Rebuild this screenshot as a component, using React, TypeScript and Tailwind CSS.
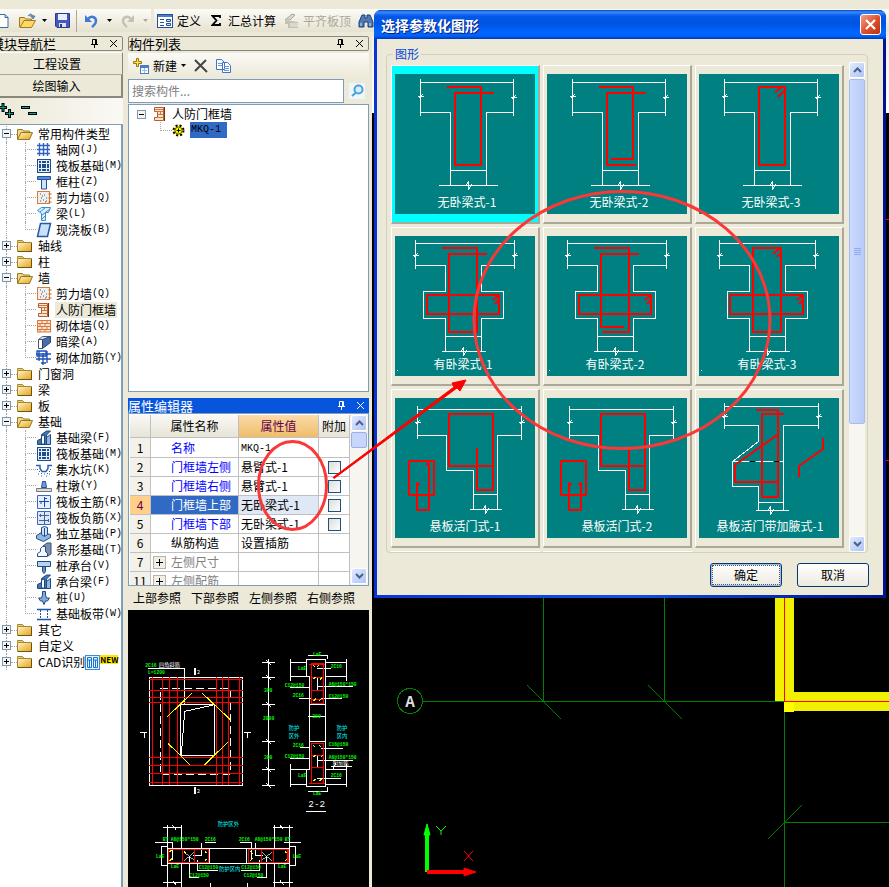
import { useState, type ReactNode } from "react";

type NodeItem = { label: string; key?: string; icon: string; active?: boolean };
type Group = { label: string; items?: NodeItem[]; isNew?: boolean };

const GROUPS: Group[] = [
  {
    label: "常用构件类型",
    items: [
      { label: "轴网", key: "(J)", icon: "grid" },
      { label: "筏板基础", key: "(M)", icon: "raft" },
      { label: "框柱", key: "(Z)", icon: "column" },
      { label: "剪力墙", key: "(Q)", icon: "shear" },
      { label: "梁", key: "(L)", icon: "beam" },
      { label: "现浇板", key: "(B)", icon: "slab" },
    ],
  },
  { label: "轴线" },
  { label: "柱" },
  {
    label: "墙",
    items: [
      { label: "剪力墙", key: "(Q)", icon: "shear" },
      { label: "人防门框墙", icon: "frame", active: true },
      { label: "砌体墙", key: "(Q)", icon: "brick" },
      { label: "暗梁", key: "(A)", icon: "hidden" },
      { label: "砌体加筋", key: "(Y)", icon: "rebar" },
    ],
  },
  { label: "门窗洞" },
  { label: "梁" },
  { label: "板" },
  {
    label: "基础",
    items: [
      { label: "基础梁", key: "(F)", icon: "footBeam" },
      { label: "筏板基础", key: "(M)", icon: "raft" },
      { label: "集水坑", key: "(K)", icon: "pit" },
      { label: "柱墩", key: "(Y)", icon: "pier" },
      { label: "筏板主筋", key: "(R)", icon: "mainBar" },
      { label: "筏板负筋", key: "(X)", icon: "negBar" },
      { label: "独立基础", key: "(P)", icon: "pad" },
      { label: "条形基础", key: "(T)", icon: "strip" },
      { label: "桩承台", key: "(V)", icon: "cap" },
      { label: "承台梁", key: "(F)", icon: "footBeam" },
      { label: "桩", key: "(U)", icon: "pile" },
      { label: "基础板带", key: "(W)", icon: "band" },
    ],
  },
  { label: "其它" },
  { label: "自定义" },
  { label: "CAD识别", isNew: true },
];

const ICONS: Record<string, ReactNode> = {
  grid: <path d="M3.5 1v13M7.5 1v13M11.5 1v13M1 3.5h13M1 7.5h13M1 11.5h13" stroke="#2f62c4" strokeWidth="1.4" fill="none" />,
  raft: (
    <>
      <rect x="1" y="1" width="14" height="14" fill="#1c4f8c" />
      <path d="M2.5 2.5h11v11h-11zM5.5 5.5h5v5h-5zM5.5 2.5v3M10.5 2.5v3M5.5 10.5v3M10.5 10.5v3M2.5 5.5h3M2.5 10.5h3M10.5 5.5h3M10.5 10.5h3" stroke="#e8f4ff" fill="none" />
    </>
  ),
  column: (
    <>
      <path d="M5.500 5h5v10h-5z" fill="#cfe4fa" stroke="#24509b" />
      <path d="M1.500 2.500h13v3h-13z" fill="#5b8ad6" stroke="#24509b" />
    </>
  ),
  shear: (
    <>
      <rect x="1.500" y="1.500" width="12" height="12" fill="#eee" stroke="#d87a3c" />
      <path d="M4 4h1M8 5h1M5 8h1M10 8h1M7 10h1M4 11h1M10 11h1M6 6h1M9 12h1" stroke="#555" />
      <path d="M12.500 4h3M12.500 8h3M12.500 12h3" stroke="#c95b12" />
    </>
  ),
  beam: (
    <>
      <path d="M1.500 4.500l4-3h9l-2 5h-3v8h-4v-7z" fill="#d9effc" stroke="#3a8bc9" />
      <path d="M4 6l5-4M6 9l8-6M6 13l4-4" stroke="#3a8bc9" />
    </>
  ),
  slab: <path d="M4.500 1.500h10l-3 13h-10z" fill="#c9e2fb" stroke="#2458a8" strokeWidth="1.500" />,
  frame: (
    <>
      <path d="M2.500 1.500h9v13h-9v-3h3v-6h-3z" fill="#fbe4cf" stroke="#b65f2a" />
      <path d="M6 5.500h5M6 8.500h5M6 11.500h5M8.500 5v4M3 3.500h8" stroke="#c97a45" />
      <path d="M12.500 1v14" stroke="#7c3408" />
    </>
  ),
  brick: (
    <>
      <rect x="1" y="2" width="14" height="12" fill="#fbe4d2" />
      <path d="M1 2.500h14M1 5.500h14M1 8.500h14M1 11.500h14M1 14h14M1.500 2v12M14.500 2v12M6 3v2M11 3v2M4 6v2M9 6v2M6 9v2M11 9v2M4 12v2M9 12v2" stroke="#d9783a" />
    </>
  ),
  hidden: (
    <>
      <path d="M2.500 5.500l4-3h8l-4 3z" fill="#e3e8ef" stroke="#44597d" />
      <path d="M2.500 5.500h4v9h-4z" fill="#fff" stroke="#44597d" />
      <path d="M6.500 5.500l8-3v6l-8 6z" fill="#4a6fa8" stroke="#2b4470" />
    </>
  ),
  rebar: <path d="M0 4h15M0 9h15M3 1v10M7 3v12M11 1v12M1 1h9v5H1zM5 13h5" stroke="#1d4fb8" strokeWidth="1.300" fill="none" />,
  footBeam: (
    <>
      <path d="M1.500 14.500v-4l4-2v-4l5-3.500h4l-4 4v9.500z" fill="#3e76b5" stroke="#1f4a80" />
      <path d="M5.500 14v-8l3-1v9z" fill="#fff" stroke="#1f4a80" />
      <path d="M10.500 14.500v-7l4-3v10z" fill="#8fb9e4" stroke="#1f4a80" />
    </>
  ),
  pit: (
    <>
      <path d="M0 3.500h4v3l2 3h4l2-3v-3h4" stroke="#2d64ad" strokeWidth="1.500" fill="none" />
      <path d="M1 7.500h1M3 9.500h1M2 12h1M5 11.500h1M8 12h1M11 11.500h1M13 9.500h1M14 7.500h1M5 14h1M10 14h1M13 12h1" stroke="#2d64ad" />
    </>
  ),
  pier: (
    <>
      <path d="M6.500 3.500h3l1 6h-5z" fill="#6a9be0" stroke="#244f96" />
      <path d="M.500 10.500h15v3h-15z" fill="#ddd" stroke="#777" />
    </>
  ),
  mainBar: (
    <>
      <path d="M1.500 1.500h13v13h-13z" fill="#e4efff" stroke="#3b66c0" />
      <path d="M8.500 3v10M3 7.500h10M8 4.500h3M5 7v3" stroke="#1a48aa" fill="none" />
    </>
  ),
  negBar: (
    <>
      <path d="M1.500 1.500h13v13h-13z" fill="#dbe8fb" stroke="#3b66c0" />
      <path d="M3 5.500h10M3 10.500h10M8.500 2v12M4.500 4v3M12.500 9v3" stroke="#445f94" fill="none" />
    </>
  ),
  pad: (
    <>
      <path d="M.500 9.500l5-3 9 2v3l-7 4-7-3z" fill="#8fb9e4" stroke="#1f4a80" />
      <path d="M5.500 1.500l3-1 3 1v7l-3 2-3-2z" fill="#cfe4fa" stroke="#1f4a80" />
      <path d="M8.500 2v8" stroke="#1f4a80" />
    </>
  ),
  strip: (
    <>
      <path d="M7 4l4-3h4v11l-3 2z" fill="#7d8fa8" stroke="#33527f" />
      <path d="M1.500 14.500v-3l3-2v-3l2-2h3v5l2 2v3z" fill="#f4f9ff" stroke="#244f86" />
    </>
  ),
  cap: (
    <>
      <path d="M1.500 3.500h13v5h-13z" fill="#b5d2f2" stroke="#1f4a80" />
      <path d="M6.500 8.500h3v5l-1.500 2-1.500-2z" fill="#5f93cf" stroke="#1f4a80" />
    </>
  ),
  pile: (
    <>
      <path d="M6.500 5V1.500h3V5l1 3h3l-2 3h-2L8 14.500 6.500 11h-2l-2-3h3z" fill="#7fabdf" stroke="#1f4a80" />
    </>
  ),
  band: (
    <>
      <path d="M1 3.500h14M1 13.500h14" stroke="#1d56a8" strokeWidth="1.500" />
      <path d="M4.500 4v9M11.500 4v9" stroke="#1d56a8" strokeDasharray="2 1" />
    </>
  ),
};

function Icon({ name }: { name: string }) {
  return (
    <svg width="16" height="16" viewBox="0 0 16 16" className="shrink-0">
      {ICONS[name]}
    </svg>
  );
}

function Folder({ open }: { open?: boolean }) {
  return (
    <svg width="16" height="16" viewBox="0 0 16 16" className="shrink-0">
      <defs>
        <linearGradient id="folder" x1="0" y1="0" x2="1" y2="1">
          <stop offset="0" stopColor="#fff6c4" />
          <stop offset="1" stopColor="#e3a21c" />
        </linearGradient>
      </defs>
      {open ? (
        <>
          <path d="M.500 13V3.500h5l1 1.500h6v3" fill="#f4d77c" stroke="#9a7a2c" />
          <path d="M.500 13.500l3.500-7h11.500l-3 7z" fill="url(#folder)" stroke="#9a7420" />
        </>
      ) : (
        <>
          <path d="M.500 4V2.500h5l1.500 2" fill="#f4d77c" stroke="#a58532" />
          <path d="M.500 4.500h14v9H.500z" fill="url(#folder)" stroke="#a58532" />
          <path d="M1 13.500h14M14.500 5v9" stroke="#6e5212" />
        </>
      )}
    </svg>
  );
}

function Expander({ open }: { open?: boolean }) {
  return (
    <button aria-label={open ? "折叠" : "展开"} className="shrink-0">
      <svg width="9" height="9" viewBox="0 0 9 9">
        <rect x=".5" y=".5" width="8" height="8" fill="#f5f4ee" stroke="#7898b5" />
        <path d={open ? "M2 4.500h5" : "M2 4.500h5M4.500 2v5"} stroke="#000" />
      </svg>
    </button>
  );
}

function NavTree() {
  return (
    <ul className="flex-1 overflow-hidden border-t border-r-2 border-[#7f9db9] bg-white pt-px">
      {GROUPS.map((g, gi) => (
        <li key={gi}>
          <div className="flex h-4 items-center">
            <div className="ml-[2px] flex h-4 w-[9px] shrink-0 flex-col items-center">
              <span className="h-[3px] border-l border-dotted border-[#aca899]" />
              <span className="flex">
                <Expander open={!!g.items} />
              </span>
              <span className="flex-1 border-l border-dotted border-[#aca899]" />
            </div>
            <span className="w-[6px] shrink-0 border-t border-dotted border-[#aca899]" />
            <Folder open={!!g.items} />
            <span className="ml-[5px] whitespace-nowrap">{g.label}</span>
            {g.isNew && <NewBadge />}
          </div>
          {g.items && (
            <ul>
              {g.items.map((n, i) => (
                <li key={i} className="flex h-4 items-center whitespace-nowrap">
                  <span className="ml-[6px] h-4 w-[19px] shrink-0 border-l border-dotted border-[#aca899]" />
                  <span className="flex h-4 w-[11px] shrink-0 flex-col">
                    <span className="h-2 border-b border-l border-dotted border-[#aca899]" />
                    {i < g.items!.length - 1 && <span className="h-2 border-l border-dotted border-[#aca899]" />}
                  </span>
                  <Icon name={n.icon} />
                  <a href="#" className={`ml-[3px] flex h-4 items-center px-px ${n.active ? "bg-[#ece9d8]" : ""}`}>
                    {n.label}
                    {n.key && <span className="[font-family:'Liberation_Mono',monospace] text-[10px]">{n.key}</span>}
                  </a>
                </li>
              ))}
            </ul>
          )}
        </li>
      ))}
    </ul>
  );
}

function NewBadge() {
  return (
    <span className="flex shrink-0 items-center">
      <svg width="15" height="15" viewBox="0 0 15 15">
        <rect x=".5" y=".5" width="14" height="14" fill="#e3f3ff" stroke="#3a8bdc" />
        <path d="M2.500 2.500h4v10h-4zM8.500 2.500h4v10h-4zM2.500 5h4M8.500 5h4M4.500 5v7M10.500 5v7" stroke="#1c72cf" fill="none" />
      </svg>
      <b className="self-start bg-[#ffe600] text-[8px] leading-[9px]">NEW</b>
    </span>
  );
}

function PaneTitle({ children, active }: { children: ReactNode; active?: boolean }) {
  return (
    <div
      className={`flex h-[15px] shrink-0 items-center justify-between ${
        active ? "bg-[#0855dd] text-white" : "rounded-[2px] border border-[#8a887c] bg-[#ece9d8] text-black"
      }`}
    >
      <h2 className="text-[13px] leading-5 whitespace-nowrap">{children}</h2>
      <span className="flex shrink-0 items-center gap-[10px] pr-[4px]">
        <button aria-label="固定">
          <svg width="9" height="9" viewBox="0 0 9 9" stroke="currentColor" fill="none">
            <path d="M2.500 5V.500h4V5M5.500 1v4M1 5.500h7M4.500 6v3" />
          </svg>
        </button>
        <button aria-label="关闭">
          <svg width="9" height="9" viewBox="0 0 9 9" stroke="currentColor" fill="none">
            <path d="M1 1l7 7M8 1L1 8" />
          </svg>
        </button>
      </span>
    </div>
  );
}

function Caret({ dim }: { dim?: boolean }) {
  return (
    <svg width="5" height="3" viewBox="0 0 5 3" className="shrink-0">
      <path d="M0 0h5L2.500 3z" fill={dim ? "#aca899" : "#000"} />
    </svg>
  );
}

function Toolbar() {
  return (
    <div className="flex h-[23px] shrink-0 items-center overflow-hidden bg-gradient-to-b from-[#fcfbf7] to-[#e6e2d0]">
      <button aria-label="新建文件">
        <svg width="9" height="16" viewBox="0 0 9 16">
          <path d="M-3 1.500h8l3 3v10H-3z" fill="#fff" stroke="#41689e" />
          <path d="M5 1.500v3h3" fill="none" stroke="#41689e" />
        </svg>
      </button>
      <button aria-label="打开" className="ml-[10px] flex items-center gap-[5px]">
        <svg width="18" height="16" viewBox="0 0 18 16">
          <path d="M.500 14V4.500h5l1 1.500h6v3" fill="#f4d77c" stroke="#a37a22" />
          <path d="M1 14.500l4-7h11.500l-4 7z" fill="#ffd766" stroke="#a37a22" />
          <path d="M9 3c2-3 5-2 5 1M12 3h4l-2 3z" fill="#7d9cc6" stroke="#5c7ba8" />
        </svg>
        <Caret />
      </button>
      <button aria-label="保存" className="ml-[8px]">
        <svg width="15" height="15" viewBox="0 0 15 15">
          <path d="M.500.500h14v14H2l-1.500-1.500z" fill="#4757c0" stroke="#2c3a94" />
          <path d="M3 1h9v6H3z" fill="#e9eefb" />
          <path d="M4 10h7v4H4z" fill="#dfe3ee" />
          <path d="M5 11h2v3H5z" fill="#2c3a94" />
        </svg>
      </button>
      <span className="ml-[6px] h-[22px] w-px bg-[#aca899]" />
      <button aria-label="撤销" className="ml-[8px] flex items-center gap-[9px]">
        <svg width="13" height="14" viewBox="0 0 13 14">
          <path d="M3 5C6 1 11 3 11 7c0 3-2 4-4 6" stroke="#3d7ad6" strokeWidth="2.500" fill="none" />
          <path d="M0 1v7h7z" fill="#3d7ad6" />
        </svg>
        <Caret />
      </button>
      <button aria-label="重做" className="ml-[9px] flex items-center gap-[9px]">
        <svg width="13" height="14" viewBox="0 0 13 14">
          <path d="M10 5C7 1 2 3 2 7c0 3 2 4 4 6" stroke="#c5c2b4" strokeWidth="2.500" fill="none" />
          <path d="M13 1v7H6z" fill="#c5c2b4" />
        </svg>
        <Caret dim />
      </button>
      <span className="ml-[3px] h-[23px] w-[3px] bg-[#ece9d8]" />
      <button className="ml-[3px] flex items-center gap-[4px] whitespace-nowrap">
        <svg width="16" height="14" viewBox="0 0 16 14">
          <rect x=".5" y=".5" width="15" height="13" fill="#fff" stroke="#24509b" />
          <path d="M1 1h14v2H1z" fill="#4d7cc7" />
          <path d="M3 5.500h4M3 8.500h4M3 11.500h4" stroke="#24509b" />
          <path d="M9.500 5.500h4v2h-4zM9.500 9.500h4v2h-4z" stroke="#24509b" fill="#cfe0f7" />
        </svg>
        定义
      </button>
      <button className="ml-[10px] flex items-center gap-[7px] whitespace-nowrap">
        <svg width="10" height="11" viewBox="0 0 10 11">
          <path d="M9 3V1H1.500L5.500 5.500 1.500 10H9V8" stroke="#000" strokeWidth="1.800" fill="none" />
        </svg>
        汇总计算
      </button>
      <button disabled className="ml-[8px] flex items-center gap-[3px] whitespace-nowrap text-[#aca899]">
        <svg width="16" height="16" viewBox="0 0 16 16">
          <path d="M1 7l7-6 3 1-5 5z" fill="#d8d5c9" stroke="#aca899" />
          <path d="M1 8h7l6 1v6H4v-4H1z" fill="#c4c1b4" />
          <path d="M6 11h8M6 13h8" stroke="#eee" />
        </svg>
        平齐板顶
      </button>
      <button aria-label="查找" className="ml-[7px]">
        <svg width="16" height="14" viewBox="0 0 16 14">
          <path d="M4 1h3v3h2V1h3l3 7v5h-5V8H6v5H1V8z" fill="#4f7bb5" stroke="#1c3f75" />
          <path d="M3 9v3M12 9v3" stroke="#cfe4fa" />
        </svg>
      </button>
    </div>
  );
}

function ScrollButton({ down }: { down?: boolean }) {
  return (
    <button
      aria-label={down ? "向下滚动" : "向上滚动"}
      className="grid h-4 w-full shrink-0 place-items-center rounded-[2px] border border-white bg-gradient-to-br from-[#e1eafe] to-[#aec4f7]"
    >
      <svg width="9" height="6" viewBox="0 0 9 6">
        <path d={down ? "M1 1l3.500 3.500L8 1" : "M1 5l3.500-3.500L8 5"} stroke="#4d6185" strokeWidth="2" fill="none" />
      </svg>
    </button>
  );
}

const PROPS = [
  { no: 1, name: "名称", value: "MKQ-1", tone: "blue" },
  { no: 2, name: "门框墙左侧", value: "悬臂式-1", tone: "blue", extra: true },
  { no: 3, name: "门框墙右侧", value: "悬臂式-1", tone: "blue", extra: true },
  { no: 4, name: "门框墙上部", value: "无卧梁式-1", tone: "selected", extra: true },
  { no: 5, name: "门框墙下部", value: "无卧梁式-1", tone: "blue", extra: true },
  { no: 6, name: "纵筋构造", value: "设置插筋", tone: "black" },
  { no: 7, name: "左侧尺寸", value: "", tone: "group" },
  { no: 11, name: "左侧配筋", value: "", tone: "group" },
];

const TONES: Record<string, string> = {
  blue: "text-[#0000ff]",
  selected: "bg-[#316ac5] text-white",
  black: "text-black",
  group: "text-[#808080]",
};

function PropertyTable() {
  return (
    <div className="flex h-[173px] shrink-0 overflow-hidden border border-[#7f9db9] bg-white">
      <div className="min-w-0 flex-1 overflow-hidden pt-px pl-px">
        <table className="w-full table-fixed border-separate border-spacing-0 leading-4 whitespace-nowrap [&_td]:h-[19px] [&_td]:border-r [&_td]:border-b [&_td]:border-[#c0c0c0] [&_td]:p-0 [&_th]:h-[23px] [&_th]:border-r [&_th]:border-b [&_th]:border-[#c0c0c0] [&_th]:p-0 [&_th]:font-normal">
          <colgroup>
            <col className="w-[21px]" />
            <col className="w-[88px]" />
            <col className="w-[80px]" />
            <col />
          </colgroup>
          <thead>
            <tr className="bg-gradient-to-b from-[#faf9f5] to-[#e6e3d6]">
              <th />
              <th>属性名称</th>
              <th className="bg-gradient-to-b from-[#fadba8] to-[#efbd68] text-[#66004c]">属性值</th>
              <th>附加</th>
            </tr>
          </thead>
          <tbody>
            {PROPS.map((p) => (
              <tr key={p.no}>
                <td className={`text-center ${p.tone === "selected" ? "bg-[#ffd08a] text-[#66004c]" : "bg-[#f3f1e9]"}`}>{p.no}</td>
                <td className={TONES[p.tone]}>
                  <span className="flex items-center">
                    <span className="flex w-5 pl-[2px]">
                      {p.tone === "group" && (
                        <button aria-label="展开" className="grid size-[13px] place-items-center border border-[#b8b5a8] bg-[#f1efe6] text-black">
                          <svg width="7" height="7" viewBox="0 0 7 7" stroke="#000">
                            <path d="M0 3.500h7M3.500 0v7" />
                          </svg>
                        </button>
                      )}
                    </span>
                    {p.name}
                  </span>
                </td>
                <td className={p.tone === "selected" ? "bg-[#dfe8f5]" : ""}>
                  {p.no === 1 ? <span className="pl-[2px] [font-family:'Liberation_Mono',monospace] text-[10px]">{p.value}</span> : <span className="pl-[2px]">{p.value}</span>}
                </td>
                <td>
                  {p.extra && (
                    <input
                      type="checkbox"
                      aria-label={`${p.name}附加`}
                      className="mx-auto block size-[13px] appearance-none border border-[#1c5180] bg-gradient-to-br from-[#dcdcd7] to-white"
                    />
                  )}
                </td>
              </tr>
            ))}
          </tbody>
        </table>
      </div>
      <div className="flex w-[18px] shrink-0 flex-col bg-[#f6f5f0] p-px">
        <ScrollButton />
        <div className="mt-px h-4 rounded-[2px] border border-[#98b0e8] bg-[#c8d6fb]" />
        <div className="flex-1" />
        <ScrollButton down />
      </div>
    </div>
  );
}

// Section drawing of the wall, in thirds of a pixel
function SectionDrawing() {
  const green = [
    [52, 81, "2C16"], [60, 102, "L=1200"], [555, 47, "LaE"], [510, 89, "LaE"], [608, 83, "2C16"],
    [470, 140, "C12@150"], [602, 137, "A6@150*150"], [494, 170, "2C16"], [602, 173, "C12@150"],
    [553, 233, "300"], [405, 239, "2000"], [408, 155, "300"], [408, 356, "300"], [494, 320, "2C16"],
    [602, 317, "C16@150"], [470, 353, "C12@150"], [602, 356, "A6@150*150"], [510, 412, "LaE"],
    [608, 410, "2C16"], [555, 464, "LaE"], [104, 602, "BT"], [128, 602, "A6@150*150"], [230, 602, "2C16"],
    [332, 602, "2C16"], [380, 602, "A6@150*150"], [470, 602, "BT"], [84, 653, "LaE"], [494, 653, "LaE"],
    [128, 683, "LaE"], [212, 687, "C12@150"], [340, 687, "C12@150"], [450, 683, "LaE"],
    [184, 711, "C12@150"], [347, 711, "C12@150"],
  ] as const;
  return (
    <svg width="239" height="277" viewBox="3 -90 717 831" className="block">
      <g fill="none" strokeWidth="3" shapeRendering="crispEdges">
        <path
          stroke="#fff"
          d="M64 112H344V436H64zM157 193H260V346H157zM160 346L170 214L256 195M60 85H169V193M36 277H58M48 277v16M347 277H369M357 277v16"
        />
        <path stroke="#fff" strokeWidth="6" d="M200 84v20M200 441v20" />
        <path stroke="#fff" strokeDasharray="24 12" d="M97 145H307V403H97z" />
        <path stroke="#f00" d="M73 112V436M103 112V436M124 112V436M148 112V436M265 112V436M284 112V436M301 112V436M334 112V436M64 118H344M64 151H344M64 172H344M64 187H344M64 352H344M64 376H344M64 400H344M64 427H344" />
        <path stroke="#ff0" d="M118 230L192 159M222 159L306 238M120 310L186 375M229 375L300 306" />
        <path stroke="#fff" d="M421 58V436M403 67H442M403 112H442M403 193H442M403 304H442M403 388H442M403 436H442M414 60l14 14M414 105l14 14M414 186l14 14M414 297l14 14M414 381l14 14M414 429l14 14" />
        <path
          stroke="#fff"
          d="M487 67H535V58H592V67H657M487 109H544V388H487M657 109H592V388H655M487 58V124M655 58V124M487 373V440M655 373V440M487 433H535V440H592V433H655M535 67V109M592 67V109M535 388V433M592 388V433M544 193H592M544 304H592M541 47H598V58M541 453H598V440M487 143H547M568 139H676M568 110V150M514 176H550M578 176H642M541 229H592M517 322H547M580 325H644M487 356H547M568 361H676M568 344V384M568 86H608M568 415H640M610 379H672M625 368L614 388M535 514H594"
        />
        <path stroke="#f00" d="M550 70V190H587V70zM544 73H592M550 112H587M550 151H587M550 178H587M550 310H587V430H550zM550 346H587M550 382H587M544 430H592" />
        <path stroke="#ff0" d="M556 76l6 6M572 76l-6 6M556 118l6-6M576 118l6-6M556 184l8-8M572 184l8-8M556 316l6 6M574 316l6 6M556 352l6-6M578 352l6-6M556 424l6-6M574 424l6-6" />
        <path
          stroke="#fff"
          d="M118 555V741M160 555V626M440 555V626M484 555V741M160 670V741M440 670V741M106 562H163M436 562H494M106 728H163M436 728H494M134 556l10 12M456 556l10 12M134 722l10 12M456 722l10 12M118 626H484M118 670H484M244 626V670M356 626V670M100 619V677M100 619H118M100 677H118M502 619V677M484 619H502M484 677H502M82 608H134V660M220 608V647H196M230 608H264M336 608H370V660M382 608V647H404M467 608H519M184 648L184 713H214M416 648V713H386M208 660V692H270M394 660V692H338M247 729V741M358 729V741"
        />
        <path stroke="#fff" strokeWidth="2" d="M168 636l32 26M200 636l-32 26M400 636l32 26M432 636l-32 26" />
        <path stroke="#f00" d="M121 628H242V668H121zM163 628V668M200 628V668M361 628H482V668H361zM400 628V668M436 628V668M478 626V670" />
        <path stroke="#ff0" d="M124 636l8-6M124 664l8-8M230 634l8 6M230 662l8-6M168 634l6 6M366 634l8 6M366 662l8-6M470 634l8 6M470 664l8-8" />
      </g>
      <g className="[font-family:'Liberation_Mono',monospace]" fontSize="14" fontWeight="700" fill="#0f0">
        {green.map(([x, y, t], i) => (
          <text key={i} x={x} y={y}>
            {t}
          </text>
        ))}
      </g>
      <g fontSize="16" fill="#0ff">
        <text x="482" y="270">防护</text>
        <text x="482" y="294">区外</text>
        <text x="626" y="270">防护</text>
        <text x="626" y="294">区内</text>
        <text x="269" y="558">防护区外</text>
        <text x="273" y="694">防护区内</text>
      </g>
      <g fill="#fff">
        <text x="92" y="81" fontSize="16">四角斜筋</text>
        <text x="614" y="378" fontSize="16">附加筋</text>
        <text x="207" y="102" fontSize="16">2</text>
        <text x="207" y="460" fontSize="16">2</text>
        <text x="541" y="502" fontSize="28" className="[font-family:'Liberation_Mono',monospace]">2-2</text>
      </g>
    </svg>
  );
}

// Break symbols: across a vertical edge, and across the foot line
const sideBreak = (x: number, y: number) => `M${x - 3} ${y}h6M${x - 2} ${y + 2}l4 -4`;
const footBreak = (x: number, y: number) => `M${x - 3} ${y + 1}L${x} ${y - 4}V${y + 4}L${x + 3} ${y - 1}`;

const SHAPE_A = `M25 8H118M25 4V41M118 4V41M25 38H55V111M118 38H91V111M55 96H91M43 111H102${sideBreak(25, 22)}${sideBreak(118, 23)}${footBreak(73, 111)}`;
const shapeB = (r: number) =>
  `M20 7H${r}M20 3V32M${r} 3V32M20 29H50V55H28V82H50V115M${r} 29H86V55H108V82H86V115M50 100H86M46 115H90M1 134h1${sideBreak(20, 19)}${sideBreak(r, 19)}${footBreak(68, 115)}`;
const SHAPE_C = `M22 11H126M22 7V40M126 7V41M22 37H51V72H78V111M126 37H102V111M78 96H102M74 111H106${sideBreak(22, 24)}${sideBreak(126, 24)}${footBreak(90, 111)}`;
const SHAPE_D = `M25 8H119M25 4V30M119 4V30M25 27H59V43L33 63V88H59V112M119 27H84V112M59 104H84M56 112H89M33 63H83${sideBreak(25, 18)}${sideBreak(119, 18)}${footBreak(71, 112)}`;

const SHAPES = [
  { name: "无卧梁式-1", mid: 72, white: SHAPE_A, red: "M52 13H86V91H60V19H99" },
  { name: "无卧梁式-2", mid: 72, white: SHAPE_A, red: "M52 13H86V85H64M99 19H60V91H89" },
  { name: "无卧梁式-3", mid: 72, white: SHAPE_A, red: "M60 13H86V91H60zM76 18L82 14M79 23L86 16" },
  { name: "有卧梁式-1", mid: 68, white: shapeB(119), red: "M47 12H82V96H54V18H92M32 59H104V78H32zM98 64L103 60M100 68L104 64" },
  { name: "有卧梁式-2", mid: 68, white: shapeB(119), red: "M47 12H82V96H55M92 18H54V91H77M32 59H104V78H32zM98 64L103 60M100 68L104 64" },
  { name: "有卧梁式-3", mid: 68, white: shapeB(116), red: "M54 12H82V96H54zM31 59H104V78H31zM98 64L103 60M100 68L104 64M74 18L80 13M78 21L82 17" },
  { name: "悬板活门式-1", mid: 70, white: SHAPE_C, red: "M54 16H98V68H54zM82 50V92H98V68M14 63H39V97H14zM25 87L22 85V112H34V65L31 67" },
  { name: "悬板活门式-2", mid: 70, white: SHAPE_C, red: "M54 16H98V68H54zM82 50V92H98V68M14 63H39V97H14zM25 87L22 85V112H34V85L31 87" },
  { name: "悬板活门带加腋式-1", mid: 71, white: SHAPE_D, red: "M57 12H79V99H63V16H85M78 37L36 67V84H79M124 40V51L100 68V79", black: "M50 63h6M74 63h6" },
];

function ShapeDialog() {
  const [selected, setSelected] = useState("无卧梁式-1");
  return (
    <section
      role="dialog"
      aria-label="选择参数化图形"
      className="absolute top-[10px] left-[374px] w-[512px] rounded-t-[7px] bg-gradient-to-r from-[#0a35d6] via-[#1450e0] to-[#00138c] px-[3px] pb-[3px]"
    >
      <header className="-mx-[3px] flex h-[29px] items-center justify-between rounded-t-[7px] bg-[linear-gradient(#0a3fc4_0,#3a8cff_2px,#0358e8_6px,#0054e3_14px,#0066ff_22px,#0062f8_26px,#0036b8_29px)] pr-[5px] pl-[7px]">
        <h1 className="text-sm font-bold text-white [text-shadow:1px_1px_#0a1f7a]">选择参数化图形</h1>
        <button
          aria-label="关闭"
          className="grid size-[21px] place-items-center rounded-[3px] border border-white bg-gradient-to-br from-[#f0a088] via-[#e0512c] to-[#b8320c]"
        >
          <svg width="13" height="13" viewBox="0 0 13 13">
            <path d="M2 2l9 9M11 2l-9 9" stroke="#fff" strokeWidth="2.200" />
          </svg>
        </button>
      </header>
      <div className="bg-[#ece9d8] pt-[7px] pr-[14px] pb-[8px] pl-[9px]">
        <fieldset className="mr-px min-w-0 rounded-[4px] border border-[#d0d0bf]">
          <legend className="ml-[6px] px-[2px] leading-4 text-[#0046d5]">图形</legend>
          <div className="flex h-[490px] overflow-hidden">
            <div className="grid flex-1 grid-cols-[repeat(3,149px)] content-start gap-[3px] pt-[3px] pl-[4px]">
              {SHAPES.map((s) => (
                <button
                  key={s.name}
                  onClick={() => setSelected(s.name)}
                  className={`h-[159px] border-t border-r-2 border-b-2 border-l border-t-white border-r-[#aca899] border-b-[#aca899] border-l-white pt-[8px] pb-[8px] pl-[3px] ${
                    selected === s.name ? "bg-[#00ffff]" : "bg-[#ece9d8]"
                  }`}
                >
                  <svg width="140" height="140" viewBox="0 0 140 140" className="block bg-[#008080]">
                    <path d={s.white} transform="translate(.5 .5)" fill="none" stroke="#fff" shapeRendering="crispEdges" />
                    <path d={s.red} fill="none" stroke="#f00" strokeWidth="2" strokeLinejoin="round" />
                    {s.black && <path d={s.black} transform="translate(.5 .5)" stroke="#000" />}
                    <text x={s.mid} y="133" fontSize="12" fill="#fff" textAnchor="middle">
                      {s.name}
                    </text>
                  </svg>
                </button>
              ))}
              <span className="h-[159px] border-t border-white" />
              <span className="h-[159px] border-t border-white" />
            </div>
            <div className="mr-[2px] flex w-4 flex-col bg-[#f7f6f1]">
              <ScrollButton />
              <div className="mt-px grid h-[345px] place-items-center rounded-[2px] border border-[#a6bbf0] bg-gradient-to-r from-[#cbdafd] to-[#b8cbf8]">
                <svg width="7" height="8" viewBox="0 0 7 8" stroke="#8faaf0">
                  <path d="M0 .5h7M0 2.500h7M0 4.500h7M0 6.500h7" />
                </svg>
              </div>
              <div className="flex-1" />
              <ScrollButton down />
            </div>
          </div>
        </fieldset>
        <div className="mt-[10px] flex justify-end gap-[15px]">
          <button className="h-6 w-[72px] rounded-[3px] border border-[#003c74] bg-gradient-to-b from-white to-[#eceae0] p-px shadow-[inset_0_0_0_1px_#9db9eb]">
            <span className="flex h-full items-center justify-center border border-dotted border-[#555]">确定</span>
          </button>
          <button className="h-6 w-[72px] rounded-[3px] border border-[#003c74] bg-gradient-to-b from-white to-[#eceae0]">取消</button>
        </div>
      </div>
    </section>
  );
}

function ModelCanvas() {
  return (
    <svg width="517" height="774" viewBox="372 113 517 774" className="block">
      <g fill="none" shapeRendering="crispEdges">
        <path d="M775 598h19v94h95v19H785v-10h-10z" fill="#f0f000" />
        <path d="M784 702h10v10h-10z" fill="#ff0" />
        <path d="M423 701.500H784M543.500 598V701M664.500 598V701M784.500 712V887M784.500 822.500H889" stroke="#008000" />
        <path d="M784.500 598V701.500H889M886 219.500h3M886 460.500h3" stroke="#f00" />
        <path d="M527 685l34 34M648 685l34 34M768 839l34-34" stroke="#008000" />
        <circle cx="410" cy="701" r="12.500" stroke="#008000" />
        <path d="M427 834V872" stroke="#0f0" strokeWidth="4" />
        <path d="M427 872h41" stroke="#f00" strokeWidth="4" />
      </g>
      <path d="M427 824l3 11h-6z" fill="#0f0" stroke="#0f0" />
      <path d="M476 872l-12-4v8z" fill="#f00" stroke="#f00" />
      <path d="M436 826l5 5 5-5M441 831v4" stroke="#0f0" fill="none" />
      <path d="M464 851l9 10M473 851l-9 10" stroke="#f00" />
      <text x="410" y="707" textAnchor="middle" fontSize="16" fontWeight="700" fill="#ddd" className="[font-family:'Liberation_Mono',monospace]">
        A
      </text>
    </svg>
  );
}

export default function App() {
  return (
    <main className="relative flex h-screen flex-col overflow-hidden bg-[#ece9d8] pt-[9px] text-xs text-black [font-family:'Noto_Sans_CJK_SC',sans-serif]">
      <Toolbar />
      <div className="flex min-h-0 flex-1 pt-1">
        {/* module navigation */}
        <nav className="mr-[5px] flex w-[123px] shrink-0 flex-col">
          <PaneTitle>
            <span className="-ml-[10px]">模块导航栏</span>
          </PaneTitle>
          <button className="mt-px h-[23px] shrink-0 border-t border-r border-b border-white border-r-[#8a887c] border-b-[#aca899] pr-2">工程设置</button>
          <button className="h-[23px] shrink-0 border-r-2 border-b-2 border-[#8a887c] pr-2">绘图输入</button>
          <div className="flex h-[26px] shrink-0 items-center gap-[7px] bg-gradient-to-r from-[#ece9d8] to-[#faf9f5]">
            <button aria-label="全部展开">
              <svg width="14" height="16" viewBox="0 0 14 16" fill="none">
                <path d="M-1 4.500h8M3 0v9M5 10.500h9M9.500 6v9" stroke="#000" strokeWidth="3" />
                <path d="M-1 4.500h7M3 1v7M6 10.500h7M9.500 7v7" stroke="#0a9f96" />
              </svg>
            </button>
            <button aria-label="全部折叠">
              <svg width="16" height="12" viewBox="0 0 16 12" fill="none">
                <path d="M0 2.500h9M7 8.500h9" stroke="#000" strokeWidth="3" />
                <path d="M1 2.500h7M8 8.500h7" stroke="#0a9f96" />
              </svg>
            </button>
          </div>
          <NavTree />
        </nav>

        {/* component list and properties */}
        <div className="mr-[3px] flex w-[241px] shrink-0 flex-col">
          <PaneTitle>构件列表</PaneTitle>
          <div className="mt-[2px] flex h-[25px] items-center bg-gradient-to-b from-[#fbfaf6] to-[#ece9d8] pl-[5px]">
            <button className="flex items-center gap-[4px]">
              <svg width="16" height="16" viewBox="0 0 16 16">
                <rect x="7.500" y="7.500" width="8" height="8" fill="#fff" stroke="#4d7cc7" />
                <path d="M8 8h7v2H8z" fill="#4d7cc7" />
                <path d="M9 12.500h5M11.500 10v5" stroke="#9db9eb" />
                <path d="M3.500.500h2v3h3v2h-3v3h-2v-3h-3v-2h3z" fill="#ffe24a" stroke="#94780c" />
              </svg>
              新建
              <Caret />
            </button>
            <button aria-label="删除" className="ml-[8px]">
              <svg width="14" height="14" viewBox="0 0 14 14">
                <path d="M1 1l12 12M12 1L1 12" stroke="#444" strokeWidth="2" />
              </svg>
            </button>
            <button aria-label="复制" className="ml-[8px]">
              <svg width="16" height="14" viewBox="0 0 16 14">
                <path d="M.500.500h5l3 3v7h-8zM6.500 3.500h5l3 3v7h-8z" fill="#fff" stroke="#4273c8" />
                <path d="M2 4.500h4M2 6.500h4M8 7.500h5M8 9.500h5M8 11.500h5" stroke="#6d95dd" />
              </svg>
            </button>
          </div>
          <div className="flex h-[25px] items-center pr-[4px]">
            <input
              type="text"
              aria-label="搜索构件"
              placeholder="搜索构件..."
              className="h-6 min-w-0 flex-1 border border-[#7f9db9] bg-white px-[3px] placeholder:text-[#808080]"
            />
            <button aria-label="搜索" className="ml-[5px] grid size-4 place-items-center bg-[#eef6fb]">
              <svg width="13" height="13" viewBox="0 0 13 13">
                <circle cx="7.500" cy="5.500" r="4" fill="#d9f0ff" stroke="#4aa3df" strokeWidth="2" />
                <path d="M5 8.500L1 12" stroke="#4aa3df" strokeWidth="2" />
              </svg>
            </button>
          </div>
          <div className="mt-px h-[288px] shrink-0 border border-[#7f9db9] bg-white pt-px pl-2">
            <div className="flex h-4 items-center">
              <Expander open />
              <span className="ml-[6px] flex">
                <Icon name="frame" />
              </span>
              <span className="ml-[4px]">人防门框墙</span>
            </div>
            <div className="flex h-4 items-center pl-[23px]">
              <span className="w-[12px] self-start border-b border-l border-dotted border-[#aca899] pt-2" />
              <svg width="13" height="13" viewBox="0 0 13 13">
                <circle cx="6.500" cy="6.500" r="5" fill="#ff0" stroke="#000" strokeWidth="2" strokeDasharray="2 2" />
                <circle cx="6.500" cy="6.500" r="3.500" fill="#ff0" stroke="#665c00" />
                <path d="M4.500 6.500h4M6.500 4.500v4" stroke="#000" />
              </svg>
              <a href="#" className="ml-[5px] flex h-4 w-[37px] items-center bg-[#316ac5] pl-px [font-family:'Liberation_Mono',monospace] text-[10px]">
                MKQ-1
              </a>
            </div>
          </div>
          <div className="mt-[6px] flex flex-col">
            <PaneTitle active>属性编辑器</PaneTitle>
          </div>
          <PropertyTable />
          <div className="flex h-[24px] shrink-0 items-center gap-[10px] pl-[5px] whitespace-nowrap">
            <button>上部参照</button>
            <button>下部参照</button>
            <button>左侧参照</button>
            <button>右侧参照</button>
          </div>
          <div className="min-h-0 flex-1 overflow-hidden bg-black px-px">
            <SectionDrawing />
          </div>
        </div>

        {/* model view */}
        <div className="flex min-w-0 flex-1 flex-col overflow-hidden">
          <div className="h-[77px] shrink-0 bg-gradient-to-b from-[#f3f1e6] to-white" />
          <div className="flex-1 bg-black">
            <ModelCanvas />
          </div>
        </div>
      </div>

      <ShapeDialog />

      <svg width="889" height="887" viewBox="0 0 889 887" className="pointer-events-none absolute top-0 left-0" fill="none">
        <ellipse cx="622" cy="320" rx="148" ry="128.500" stroke="#fb3838" strokeWidth="3" />
        <ellipse cx="292.500" cy="485.500" rx="34" ry="44" stroke="#fb3838" strokeWidth="3" />
        <path d="M333 477.500L454 387l-2-4 14-3-6 11-3-3L334 478.500z" fill="#f00" stroke="#f00" />
      </svg>
    </main>
  );
}
